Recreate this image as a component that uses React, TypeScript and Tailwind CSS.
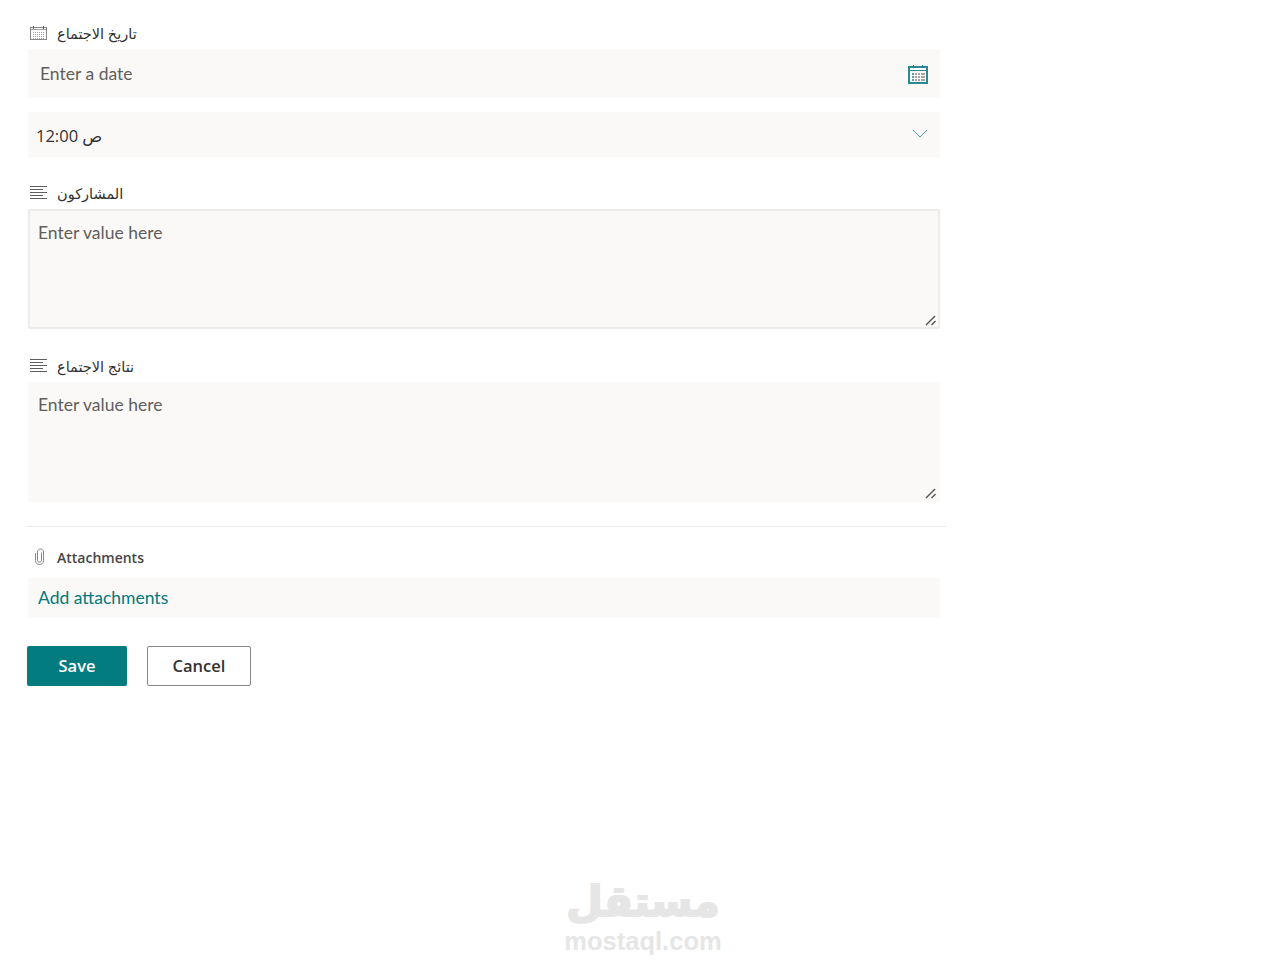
import React from "react";

function SmallCal() {
  return (
    <svg width="20" height="16" viewBox="0 0 20 16" fill="none" shapeRendering="crispEdges" className="mb-[2px]">
      <rect x="0.5" y="2.5" width="16" height="12" stroke="#8a8886" />
      <path d="M1 4.5H16" stroke="#a19f9d" />
      <path d="M3.5 1V4M13.5 1V4" stroke="#605e5c" />
      {[7, 9, 11, 13].map((y) =>
        [3, 5, 7, 9, 11, 13].map((x) => (
          <rect key={`${x}-${y}`} x={x} y={y} width="1" height="1" fill="#a19f9d" />
        ))
      )}
    </svg>
  );
}

function TealCal() {
  return (
    <svg width="20" height="20" viewBox="0 0 20 20" fill="none" shapeRendering="crispEdges">
      <rect x="1" y="3" width="18" height="16" stroke="#2b8a91" strokeWidth="2" />
      <rect x="2" y="4" width="16" height="2" fill="#ffffff" />
      <path d="M1 6.5H19" stroke="#2b8a91" />
      <path d="M5.5 1V4M14.5 1V4" stroke="#038387" />
      {[9, 12, 15].map((y) =>
        [4, 7, 10, 13, 15].map((x) => (
          <rect key={`${x}-${y}`} x={x} y={y} width="2" height="1.5" fill={x === 4 ? "#5d9da3" : "#a8a6a4"} />
        ))
      )}
    </svg>
  );
}

function LinesIcon() {
  return (
    <svg width="18" height="14" viewBox="0 0 18 14" fill="none" shapeRendering="crispEdges">
      <path d="M0 0.5H17M0 3.5H13M0 6.5H17M0 9.5H13M0 12.5H17" stroke="#605e5c" />
    </svg>
  );
}

function ClipIcon() {
  return (
    <svg width="12" height="18" viewBox="0 0 12 18" fill="none">
      <path
        d="M1.5 5V12.5C1.5 15 3 16.5 5.5 16.5C8 16.5 9.5 15 9.5 12.5V4C9.5 2.3 8.2 1 6.5 1C4.8 1 3.5 2.3 3.5 4V12C3.5 13.4 4.3 14.3 5.5 14.3C6.7 14.3 7.5 13.4 7.5 12V4.5"
        stroke="#8a8886"
        strokeWidth="1"
      />
    </svg>
  );
}

function Grip() {
  return (
    <svg
      width="12"
      height="12"
      viewBox="0 0 12 12"
      fill="none"
      className="absolute right-[3px] bottom-[3px] pointer-events-none"
    >
      <path d="M1 11L10 2M6.5 11L10.5 7" stroke="#505050" strokeWidth="1.4" />
    </svg>
  );
}

function Label({ icon, text, low }: { icon: React.ReactNode; text: string; low?: boolean }) {
  return (
    <div className="flex items-center h-[20px]">
      <div className="w-[27px] flex justify-start shrink-0">{icon}</div>
      <span className={`leading-[20px] text-[14.5px] font-normal text-[#323130] ${low ? "mt-[2px]" : ""}`}>{text}</span>
    </div>
  );
}

function Area({ bordered }: { bordered?: boolean }) {
  return (
    <div className="relative">
      <textarea
        placeholder="Enter value here"
        className={`block w-full h-[120px] bg-[#faf9f8] border-2 rounded-[2px] px-[8px] pb-[8px] text-[17.5px] leading-[24px] placeholder:text-[#605e5c] resize-none ${bordered ? "border-[#edebe9] pt-[10px]" : "border-[#faf9f8] pt-[9px]"}`}
        style={{ fontFamily: 'Lato, "DejaVu Sans", sans-serif' }}
      />
      <Grip />
    </div>
  );
}

export default function App() {
  const lato = { fontFamily: 'Lato, "DejaVu Sans", sans-serif' };
  return (
    <div
      className="relative min-h-[972px] w-full bg-white pt-[24px] pl-[28px] text-[#323130]"
      style={{ fontFamily: '"Open Sans", "DejaVu Sans", sans-serif' }}
    >
      <div className="w-[912px]">
        <div className="pl-[2px]">
          <Label icon={<SmallCal />} text="تاريخ الاجتماع" />
        </div>
        <div className="mt-[5px] h-[48px] bg-[#faf9f8] flex items-center justify-between pl-[12px] pr-[12px] rounded-[2px]">
          <span className="text-[17.5px] text-[#605e5c] mt-[2px]" style={lato}>Enter a date</span>
          <div className="mt-[2px]"><TealCal /></div>
        </div>
        <div className="mt-[15px] h-[45px] bg-[#faf9f8] flex items-center justify-between pl-[8px] pr-[12px]">
          <span className="text-[16.5px] text-[#323130] mt-[3px]">12:00 ص</span>
          <svg width="16" height="9" viewBox="0 0 16 9" fill="none" className="mb-[2px]">
            <path d="M1 1L8 8L15 1" stroke="#4f9da0" strokeWidth="1" />
          </svg>
        </div>
        <div className="mt-[26px] pl-[2px]">
          <Label icon={<LinesIcon />} text="المشاركون" low />
        </div>
        <div className="mt-[6px]">
          <Area bordered />
        </div>
        <div className="mt-[27px] pl-[2px]">
          <Label icon={<LinesIcon />} text="نتائج الاجتماع" low />
        </div>
        <div className="mt-[6px]">
          <Area />
        </div>
      </div>
      <div className="mt-[24px] -ml-[1px] w-[919px] h-px bg-[#edebe9]" />
      <div className="w-[912px]">
        <div className="mt-[20px] pl-[6px]">
          <div className="flex items-center h-[20px]">
            <div className="w-[23px] shrink-0"><ClipIcon /></div>
            <span className="text-[14px] leading-[20px] font-semibold text-[#484644] mt-[2px]">Attachments</span>
          </div>
        </div>
        <div className="mt-[11px] h-[39px] bg-[#faf9f8] flex items-center pl-[10px] rounded-[2px]">
          <span className="text-[17.5px] text-[#03787c] mt-[2px]" style={lato}>Add attachments</span>
        </div>
      </div>
      <div className="mt-[29px] -ml-[1px] flex gap-[20px]">
        <button className="w-[100px] h-[40px] bg-[#037c7f] rounded-[2px] text-white text-[16.5px] font-semibold">Save</button>
        <button className="w-[104px] h-[40px] bg-white border border-[#8a8886] rounded-[2px] text-[#323130] text-[16.5px] font-semibold">Cancel</button>
      </div>
      <div className="absolute left-[555px] top-[878px] w-[176px] flex flex-col items-center text-[#e6e6e6] select-none">
        <span
          className="text-[42px] leading-[48px] font-bold [-webkit-text-stroke:2px_#e6e6e6]"
          style={{ fontFamily: '"DejaVu Sans", sans-serif' }}
        >
          مستقل
        </span>
        <span className="text-[25.5px] leading-[26px] font-bold mt-[2px]" style={{ fontFamily: '"Liberation Sans", sans-serif' }}>
          mostaql.com
        </span>
      </div>
    </div>
  );
}
